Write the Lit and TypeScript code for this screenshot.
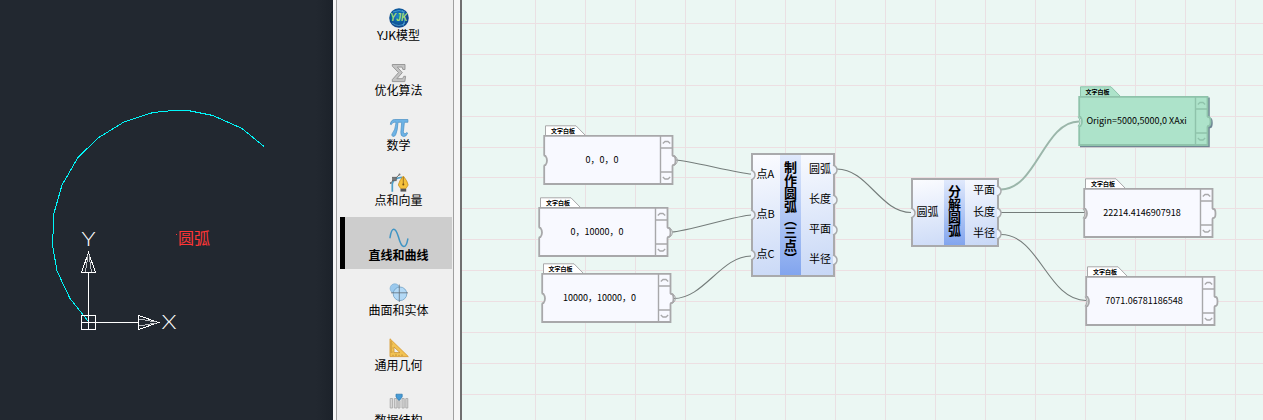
import { LitElement, html, svg, css } from "lit";
import { customElement, property } from "lit/decorators.js";

/* Category icons, each on a 20x20 grid */
const icons: Record<string, unknown> = {
  yjk: svg`
    <defs><radialGradient id="globe" cx="45%" cy="40%"><stop offset="0" stop-color="#1c86c8"/><stop offset=".7" stop-color="#0c5a9e"/><stop offset="1" stop-color="#134a8c"/></radialGradient></defs>
    <circle cx="10" cy="10" r="9.8" fill="url(#globe)"/>
    <path d="M4 4Q10 1 16 4M3 15Q10 20 16 15M13 2Q18 9 14 18" fill="none" stroke="#4fa6d8" stroke-width=".8"/>
    <text x="9.8" y="13.4" text-anchor="middle" font-size="10.5" font-weight="700" font-style="italic" font-family="Liberation Sans" fill="#a4dc74" textLength="17.5" lengthAdjust="spacingAndGlyphs">YJK</text>`,
  sigma: svg`
    <path d="M3.3 1.5H16v5h-2.1l-.8-2.4H8.3l5 5.5-5.4 6.1h5.7l1.2-2.4h1.8l-.8 5.3H3.3v-2l6.2-7-6.2-6.5z" fill="#c4c4c4" stroke="#929292" stroke-width=".9"/>`,
  pi: svg`
    <path d="M1.3 6.3Q2 1.7 5.6 1.5H18.9V4.3H15.4L14.4 13.7Q14.4 16 16 15.8 17 15.7 17.6 14.5L18.6 15Q17.6 18.6 14.7 18.6 11.6 18.5 11.8 14.5L12.7 4.3H9Q8.6 13 6.6 16.9 5.5 18.9 3.6 18.3 2 17.2 3.3 15.5 6.2 12.6 7.1 4.3H5.2Q3.2 4.3 2.4 6.6Z" fill="#6db3e6" stroke="#4b8fc4" stroke-width=".7"/>`,
  pen: svg`
    <path d="M3.3 18.8V11Q4 5 13 4.3" fill="none" stroke="#4e9fc8" stroke-width="1.7"/>
    <path d="M1 10.5 11 1" stroke="#6e6e6e" stroke-width="1"/>
    <circle cx="1.8" cy="10" r="1" fill="#777"/><circle cx="10.5" cy="1.5" r="1" fill="#777"/>
    <rect x="3.6" y="4.2" width="3.6" height="3.6" fill="#777" stroke="#555" stroke-width=".6"/>
    <path d="M14.3 3Q18.5 8 19.2 12L17 15.5H11.6L9.3 12Q10 8 14.3 3Z" fill="#f6c23b" stroke="#c48a19" stroke-width=".7"/>
    <path d="M14.3 4v7" stroke="#8a621c" stroke-width=".8"/><circle cx="14.3" cy="11.4" r="1" fill="#765015"/>
    <path d="M11.5 15.8h5.7v2.8h-5.7z" fill="#555"/>`,
  wave: svg`
    <path d="M1 9.7C2.6-1.6 6.3-1.4 9.4 8.8 12.8 21.7 17 21.2 18.8 11.1" fill="none" stroke="#3f94c4" stroke-width="1.5" stroke-linecap="round"/>`,
  solids: svg`
    <circle cx="5.8" cy="5.5" r="4.7" fill="#9bc9ed" stroke="#7eaed2" stroke-width=".7"/>
    <circle cx="11" cy="10.8" r="6.8" fill="#b3d9f6" stroke="#6f9fc4" stroke-width=".8"/>
    <path d="M10.3 1.5V19M2 9.8H19" stroke="#626e78" stroke-width=".8"/>`,
  ruler: svg`
    <path d="M1 .8V18.6H19.3Z" fill="#f2c354" stroke="#d99c35" stroke-width=".9"/>
    <path d="M5 9V14.6H11Z" fill="#efefef" stroke="#ca9231" stroke-width=".8"/>
    <path d="M1.5 4h1.5M1.5 6h2M1.5 8h1.5M1.5 10h2M1.5 12h1.5M1.5 14h2M4 18v-1.2M7 18v-1.8M10 18v-1.2M13 18v-1.5" stroke="#a6762b" stroke-width=".7"/>`,
  data: svg`
    <path d="M1.2 5.5h2.4v9.5H1.2zM5.4 5.5H8v9.5H5.4zM9 7.5h2v7.5H9zM13 5.5h2.2v9.5H13zM16.8 5.5h2v9.5h-2z" fill="#d6d6d6" stroke="#aaa" stroke-width=".9"/>
    <path d="M7 1.2h6.2v2.6L10.8 7H9.4L7 3.8z" fill="#479bd6" stroke="#2a77ad" stroke-width=".7"/>`,
};

const categories = [
  ["yjk", "YJK模型"], ["sigma", "优化算法"], ["pi", "数学"], ["pen", "点和向量"],
  ["wave", "直线和曲线"], ["solids", "曲面和实体"], ["ruler", "通用几何"], ["data", "数据结构"],
];

@customElement("cad-view")
class CadView extends LitElement {
  static styles = css`
    :host { display: block; width: 333px; background: linear-gradient(90deg, #222830 0 316px, #1c222a 333px); }
    svg { display: block; }
    .axis { font: 300 19.5px Lato, "Open Sans", sans-serif; fill: #fff; }
    .name { font: 16px "Noto Sans CJK SC", sans-serif; fill: #ff3636; }
  `;
  render() {
    return html`<svg width="333" height="420" fill="none">
      <polyline shape-rendering="crispEdges" stroke="#00f7f9" points="264,146.5 242,128.5 213,115.5 188,110.5 173,110.5 153,112.5 124,122 98,138 78,157.5 62,185 54,213 52.5,245 57,271 70,298.5 88,321"/>
      <g stroke="#fff" shape-rendering="crispEdges">
        <path d="M81.5 315.5h14v14h-14zM88.5 273V329M82 322.5h57"/>
        <path d="M88.5 252.5 81.5 272.5h14zM158.5 322.5 138.5 315.5v14z"/>
        <path stroke="#b9bcc0" d="M88 255 85.5 272M89 255 91.5 272M156 322 139 319M156 323 139 326"/>
      </g>
      <text class="axis" text-anchor="middle" x="88.5" y="246" textLength="14" lengthAdjust="spacingAndGlyphs">Y</text>
      <text class="axis" text-anchor="middle" x="169" y="329" textLength="15" lengthAdjust="spacingAndGlyphs">X</text>
      <rect x="176" y="234" width="1" height="1" fill="#ff3636"/>
      <text class="name" x="178" y="244">圆弧</text>
    </svg>`;
  }
}

@customElement("category-bar")
class CategoryBar extends LitElement {
  static styles = css`
    :host { display: block; box-sizing: border-box; width: 129px; overflow: hidden; background: #f6f6f6; border-right: 2px solid #6f6f6f; padding: 0 6px 0 3px; }
    .rail { box-sizing: border-box; height: 100%; background: #efefef; border: solid #a0a0a0; border-width: 0 1px 0 1px; overflow: hidden; padding: 0 1px 0 3px; }
    .list { display: flex; flex-direction: column; gap: 3px; margin-top: -3px; }
    .item { box-sizing: border-box; height: 52px; flex: none; display: flex; flex-direction: column; align-items: center; padding: 11px 0 0 5px; border-left: 0 solid #000; font: 12px/16px "Noto Sans CJK SC", sans-serif; color: #000; white-space: nowrap; }
    .current { background: #cdcdcd; border-left-width: 5px; padding-left: 0; font-weight: 700; }
    svg { flex: none; margin-bottom: -1px; }
  `;
  render() {
    return html`<div class="rail"><div class="list">${categories.map(([icon, label]) => html`
      <div class="item ${icon === "wave" ? "current" : ""}">
        <svg width="20" height="20" viewBox="0 0 20 20">${icons[icon]}</svg>
        <span>${label}</span>
      </div>`)}</div></div>`;
  }
}

@customElement("text-panel")
class TextPanel extends LitElement {
  @property() text = "";
  @property({ type: Boolean }) active = false;
  @property({ type: Boolean }) linkedIn = false;
  @property({ type: Boolean }) linkedOut = false;
  static styles = css`
    :host { display: block; position: relative; width: 134px; height: 62px; }
    .frame { position: absolute; inset: 0; overflow: visible; }
    .content { position: relative; display: flex; flex-direction: column; }
    .tab { height: 11px; padding-left: 8px; font: 700 6px/11px "Noto Sans CJK SC", sans-serif; color: #000; }
    .value { width: 118px; height: 48px; display: flex; align-items: center; justify-content: center; font: 9px/12px "Noto Sans CJK SC", sans-serif; color: #000; white-space: nowrap; }
  `;
  render() {
    const line = this.active ? "#8fc3ab" : "#a8a8aa";
    const fill = this.active ? "#ade3ca" : "#f8f9ff";
    const body = "M1.2 10.8H129.500V30.5Q129.500 31 130.500 31 132.500 31 132.500 35.5T130.500 40Q129.500 40 129.500 41V59H1.200V41Q1.200 40 2.5 40 4 38 4 35.5T2.5 31Q1.200 31 1.200 30Z";
    return html`
      <svg class="frame" width="134" height="62">
        ${this.active ? svg`<path d=${body} transform="translate(1.5 1.5)" fill="#6f8794" stroke="#6f8794" stroke-width="1.5"/>` : ""}
        <path d="M2.5 10.5V.8H33L42.5 10.5" fill=${this.active ? fill : "#fff"} stroke=${line} stroke-width="1"/>
        <path d=${body} fill=${fill} stroke=${line} stroke-width="1.8"/>
        <path d="M117.5 11V59M117.5 23H129.500M117.5 47H129.500" stroke=${line} stroke-width="1.4"/>
        <path d="M119.800 18.500 122 16.500H125L127.200 18.500M119.800 52 122 54H125L127.200 52" fill="none" stroke=${line} stroke-width="1.3"/>
        ${this.linkedIn ? svg`<path d="M0 30.5Q2 33 2 35.5T0 40.5" fill="none" stroke=${line} stroke-width="1.2"/>` : ""}
        ${this.linkedOut ? svg`<path d="M131.5 30.5Q134.5 33 134.5 35.5T131.5 40.5" fill="none" stroke=${line} stroke-width="1"/>` : ""}
      </svg>
      <div class="content"><div class="tab">文字白板</div><div class="value">${this.text}</div></div>`;
  }
}

@customElement("component-node")
class ComponentNode extends LitElement {
  @property() name = "";
  @property({ type: Array }) inputs: string[] = [];
  @property({ type: Array }) outputs: string[] = [];
  static styles = css`
    :host { display: block; box-sizing: border-box; border: 2px solid #a9aaac; background: linear-gradient(170deg, #fbfcff, #c7d7f6); }
    .body { display: flex; height: 100%; }
    .ports { flex: 1; min-width: 0; display: flex; flex-direction: column; font: 11px/16px "Noto Sans CJK SC", sans-serif; color: #000; white-space: nowrap; }
    .port { flex: 1; display: flex; align-items: center; position: relative; padding-bottom: 4px; }
    .in { padding-left: 3.5px; }
    .out { flex: none; width: 32px; }
    .out .port { justify-content: flex-end; padding-right: 2px; }
    .ports svg { position: absolute; overflow: visible; }
    .in svg { left: -6px; margin-top: 4px; }
    .out svg { right: -5px; margin-top: 4px; }
    .title { width: 21px; flex: none; box-sizing: border-box; background: linear-gradient(180deg, #e0e9fc, #82a5ee); display: flex; align-items: center; justify-content: center; padding-bottom: 4px; font: 700 13px/21px "Noto Sans CJK SC", sans-serif; color: #000; writing-mode: vertical-rl; white-space: nowrap; }
  `;
  render() {
    const grip = svg`<path d="M0 1Q4 2.5 4 6T0 11" fill="#eef4fb" stroke="#a9aaac" stroke-width="1.5"/>`;
    return html`<div class="body">
      <div class="ports in">${this.inputs.map((p) => html`<div class="port"><svg width="5" height="12">${grip}</svg>${p}</div>`)}</div>
      <div class="title">${this.name}</div>
      <div class="ports out">${this.outputs.map((p) => html`<div class="port">${p}<svg width="5" height="12">${grip}</svg></div>`)}</div>
    </div>`;
  }
}

/* Node canvas; coordinates are relative to its own top-left corner */
@customElement("node-canvas")
class NodeCanvas extends LitElement {
  static styles = css`
    :host { display: block; position: relative; flex: 1; overflow: hidden; background: #ebf7f3; }
    .back { position: absolute; inset: 0; }
    text-panel, component-node { position: absolute; }
    .p1 { left: 81px; top: 125px; } .p2 { left: 76px; top: 197px; } .p3 { left: 78.5px; top: 263px; }
    .p4 { left: 615.5px; top: 86px; } .p5 { left: 621px; top: 177.5px; } .p6 { left: 623px; top: 265.5px; }
    .make { left: 289px; top: 153px; width: 84px; height: 124px; }
    .split { left: 449px; top: 178px; width: 88px; height: 69px; }
  `;
  render() {
    const rows = [23, 54, 85, 116, 147, 177, 208, 239, 270, 301, 332, 363, 394];
    const cols = Array.from({ length: 15 }, (_, i) => 73 + 50 * i);
    const wires = [[214, 160, 289, 174], [210, 232, 289, 215], [212, 298.5, 289, 256], [375, 169, 449, 212.5], [539, 212.5, 623, 212.5], [539, 234.5, 624, 300.5]];
    const curve = ([a, b, c, d]: number[]) => {
      const pull = Math.min((c - a) * 0.45, Math.abs(d - b) * 0.7);
      return `M${a} ${b}C${a + pull} ${b} ${c - pull} ${d} ${c} ${d}`;
    };
    return html`
      <svg class="back" width="801" height="420">
        <g fill="#eddfe2">${rows.map((y) => svg`<rect x="0" y=${y} width="801" height="1"/>`)}</g>
        <g fill="#eae0e3">${cols.map((x) => svg`<rect x=${x} y="0" width="1" height="420"/>`)}</g>
        <g fill="none" stroke="#747c7a" stroke-width="1.1">${wires.map((w) => svg`<path d=${curve(w)}/>`)}
          <path d=${curve([539, 189.5, 617, 121.5])} stroke="#9bb6aa" stroke-width="2"/></g>
      </svg>
      <text-panel class="p1" linkedOut text="0，0，0"></text-panel>
      <text-panel class="p2" linkedOut text="0，10000，0"></text-panel>
      <text-panel class="p3" linkedOut text="10000，10000，0"></text-panel>
      <text-panel class="p4" active linkedIn text="Origin=5000,5000,0 XAxi"></text-panel>
      <text-panel class="p5" linkedIn text="22214.4146907918"></text-panel>
      <text-panel class="p6" linkedIn text="7071.06781186548"></text-panel>
      <component-node class="make" name="制作圆弧（三点）" .inputs=${["点A", "点B", "点C"]} .outputs=${["圆弧", "长度", "平面", "半径"]}></component-node>
      <component-node class="split" name="分解圆弧" .inputs=${["圆弧"]} .outputs=${["平面", "长度", "半径"]}></component-node>`;
  }
}

@customElement("app-root")
class AppRoot extends LitElement {
  static styles = css`
    :host { display: flex; width: 1263px; height: 420px; overflow: hidden; }
    cad-view, category-bar { flex: none; }
  `;
  render() {
    return html`<cad-view></cad-view><category-bar></category-bar><node-canvas></node-canvas>`;
  }
}
